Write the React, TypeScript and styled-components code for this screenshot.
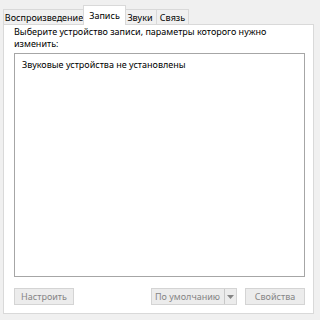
import React from "react";
import styled, { createGlobalStyle } from "styled-components";

const Global = createGlobalStyle`
  html, body { margin: 0; padding: 0; background: #f0f0f0; }
  * { box-sizing: border-box; }
`;

const Root = styled.div`
  width: 316px;
  height: 320px;
  background: #f0f0f0;
  padding: 6px 2px 6px 3px;
  display: flex;
  flex-direction: column;
  font-family: "Noto Sans", "Open Sans", sans-serif;
  font-size: 9px;
  color: #000000;
`;

const TabStrip = styled.div`
  display: flex;
  align-items: flex-end;
  height: 19px;
  margin-bottom: -1px;
  position: relative;
  z-index: 1;
`;

const Tab = styled.div<{ $active?: boolean; $w: number }>`
  width: ${(p) => p.$w}px;
  height: ${(p) => (p.$active ? 20 : 16)}px;
  margin: ${(p) => (p.$active ? "0 -2px" : "0")};
  background: ${(p) => (p.$active ? "#ffffff" : "#f0f0f0")};
  border: 1px solid #d9d9d9;
  border-bottom: ${(p) => (p.$active ? "none" : "1px solid #d9d9d9")};
  border-left: ${(p) => (p.$active ? "1px solid #d9d9d9" : "none")};
  display: flex;
  align-items: ${(p) => (p.$active ? "flex-start" : "center")};
  justify-content: center;
  padding-top: ${(p) => (p.$active ? "3px" : "0")};
  white-space: nowrap;
  position: relative;
  z-index: ${(p) => (p.$active ? 2 : 1)};
  &:first-child { border-left: 1px solid #d9d9d9; }
`;

const Panel = styled.div`
  flex: 1;
  background: #ffffff;
  border: 1px solid #d9d9d9;
  display: flex;
  flex-direction: column;
  padding: 1px 8px 8px 10px;
`;

const Prompt = styled.div`
  line-height: 12px;
`;

const ListBox = styled.div`
  flex: 1;
  margin-top: 3px;
  border: 1px solid #a6a6a6;
  padding: 5px 7px;
  line-height: 11px;
`;

const ButtonRow = styled.div`
  display: flex;
  align-items: center;
  margin-top: 11px;
  height: 17px;
`;

const Button = styled.div<{ $w: number }>`
  width: ${(p) => p.$w}px;
  height: 17px;
  background: #ececec;
  border: 1px solid #d4d4d4;
  color: #858585;
  display: flex;
  align-items: center;
  justify-content: center;
  white-space: nowrap;
`;

const Spacer = styled.div`
  flex: 1;
`;

const SplitButton = styled(Button)`
  justify-content: flex-start;
  padding-left: 3px;
  margin-right: 8px;
`;

const SplitLabel = styled.span`
  flex: 1;
`;

const Arrow = styled.span`
  width: 12px;
  height: 100%;
  border-left: 1px solid #c8c8c8;
  display: flex;
  align-items: center;
  justify-content: center;
`;

export default function App() {
  return (
    <>
      <Global />
      <Root>
        <TabStrip>
          <Tab $w={82}>Воспроизведение</Tab>
          <Tab $active $w={43}>Запись</Tab>
          <Tab $w={33}>Звуки</Tab>
          <Tab $w={32}>Связь</Tab>
        </TabStrip>
        <Panel>
          <Prompt>
            Выберите устройство записи, параметры которого нужно
            <br />
            изменить:
          </Prompt>
          <ListBox>Звуковые устройства не установлены</ListBox>
          <ButtonRow>
            <Button $w={60}>Настроить</Button>
            <Spacer />
            <SplitButton $w={86}>
              <SplitLabel>По умолчанию</SplitLabel>
              <Arrow>
                <svg width="7" height="4" viewBox="0 0 7 4">
                  <path d="M0 0 L7 0 L3.5 4 Z" fill="#858585" />
                </svg>
              </Arrow>
            </SplitButton>
            <Button $w={60}>Свойства</Button>
          </ButtonRow>
        </Panel>
      </Root>
    </>
  );
}
